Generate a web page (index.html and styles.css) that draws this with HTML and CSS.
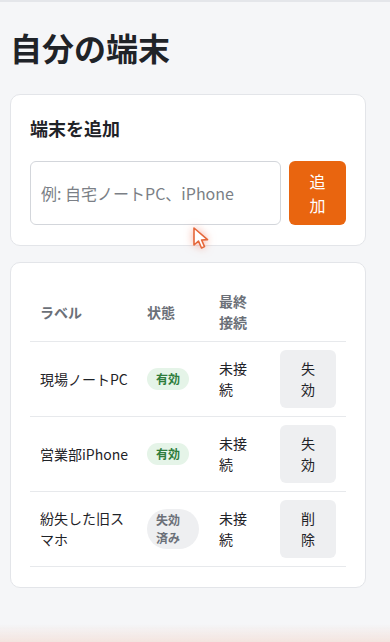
FILE: index.html
```html
<!DOCTYPE html>
<html lang="ja">
<head>
<meta charset="utf-8">
<meta name="viewport" content="width=device-width, initial-scale=1">
<title>自分の端末</title>
<link rel="stylesheet" href="styles.css">
</head>
<body>
<main class="page">
  <h1 class="title">自分の端末</h1>

  <section class="card add-card">
    <h2 class="card-title">端末を追加</h2>
    <form class="add-form">
      <input class="text-input" type="text" placeholder="例: 自宅ノートPC、iPhone">
      <button class="btn-primary" type="button">追加</button>
    </form>
  </section>

  <section class="card list-card">
    <table class="devices">
      <colgroup>
        <col class="c-label"><col class="c-state"><col class="c-last"><col class="c-act">
      </colgroup>
      <thead>
        <tr><th>ラベル</th><th>状態</th><th>最終接続</th><th></th></tr>
      </thead>
      <tbody>
        <tr>
          <td>現場ノートPC</td>
          <td><span class="badge badge-on">有効</span></td>
          <td>未接続</td>
          <td><button class="btn-sub" type="button">失効</button></td>
        </tr>
        <tr>
          <td>営業部iPhone</td>
          <td><span class="badge badge-on">有効</span></td>
          <td>未接続</td>
          <td><button class="btn-sub" type="button">失効</button></td>
        </tr>
        <tr>
          <td>紛失した旧スマホ</td>
          <td><span class="badge badge-off">失効済み</span></td>
          <td>未接続</td>
          <td><button class="btn-sub" type="button">削除</button></td>
        </tr>
      </tbody>
    </table>
  </section>
</main>

<div class="cursor" aria-hidden="true">
  <svg width="22" height="26" viewBox="0 0 22 26">
    <path d="M3 2 L3 19 L7.5 15 L10.5 22 L13.5 20.6 L10.6 14 L16.5 13.6 Z" fill="#ffffff" stroke="#e5673a" stroke-width="1.6" stroke-linejoin="round"/>
  </svg>
</div>
<div class="bottom-glow" aria-hidden="true"></div>
</body>
</html>
```

FILE: styles.css
```css
* { box-sizing: border-box; }

html, body {
  margin: 0;
  padding: 0;
}

body {
  background: #f5f6f8;
  color: #1f2328;
  font-family: "Noto Sans CJK JP", "Noto Sans", sans-serif;
  font-size: 14px;
  line-height: 1.5;
  border-top: 2px solid #e4e6ea;
  min-height: 642px;
}

.page {
  padding: 0 24px 40px 10px;
}

.title {
  margin: 0;
  padding-top: 23px;
  font-size: 32px;
  line-height: 44px;
  font-weight: 700;
  color: #1f2328;
}

.card {
  background: #ffffff;
  border: 1px solid #e3e5e9;
  border-radius: 10px;
  padding: 20px 19px;
}

.add-card {
  margin-top: 25px;
}

.card-title {
  margin: 0 0 19px;
  font-size: 18px;
  line-height: 27px;
  font-weight: 700;
  color: #1f2328;
}

.add-form {
  display: flex;
  gap: 8px;
  margin: 0;
}

.text-input {
  flex: 1 1 auto;
  min-width: 0;
  border: 1px solid #d3d6db;
  border-radius: 6px;
  padding: 0 10px;
  font-family: inherit;
  font-size: 16px;
  color: #1f2328;
  background: #fff;
}

.text-input::placeholder {
  color: #7b7f86;
}

.btn-primary {
  flex: 0 0 57px;
  width: 57px;
  border: none;
  border-radius: 6px;
  background: #e9650f;
  color: #ffffff;
  font-family: inherit;
  font-size: 16px;
  line-height: 24px;
  padding: 8px 16px;
}

.list-card {
  margin-top: 16px;
}

.devices {
  width: 100%;
  table-layout: fixed;
  border-collapse: collapse;
}

.c-label { width: 107px; }
.c-state { width: 72px; }
.c-last { width: 61px; }
.c-act { width: 76px; }

.devices th,
.devices td {
  padding: 8px 10px;
  text-align: left;
  vertical-align: middle;
  border-bottom: 1px solid #e7e9ec;
  line-height: 21px;
  font-size: 14px;
}

.devices th:first-child,
.devices td:first-child {
  padding-right: 4px;
}

.devices th {
  color: #6b7078;
  font-weight: 700;
}

.devices td {
  color: #1f2328;
}

.badge {
  display: inline-block;
  border-radius: 999px;
  padding: 2px 9px;
  font-size: 12px;
  line-height: 18px;
  font-weight: 700;
}

.badge-on {
  background: #e5f4e8;
  color: #2e7d3c;
}

.badge-off {
  background: #eeeff1;
  color: #6b7078;
}

.btn-sub {
  display: block;
  width: 56px;
  border: none;
  border-radius: 6px;
  background: #eeeff1;
  color: #1f2328;
  font-family: inherit;
  font-size: 14px;
  line-height: 21px;
  padding: 8px 16px;
}

.cursor {
  position: absolute;
  left: 191px;
  top: 226px;
  width: 22px;
  height: 26px;
  filter: drop-shadow(0 0 4px rgba(240, 110, 80, 0.55));
}

.bottom-glow {
  position: fixed;
  left: 0;
  right: 0;
  bottom: 0;
  height: 18px;
  background: linear-gradient(to bottom, rgba(245, 230, 225, 0), rgba(243, 226, 220, 0.9));
  pointer-events: none;
}
```
